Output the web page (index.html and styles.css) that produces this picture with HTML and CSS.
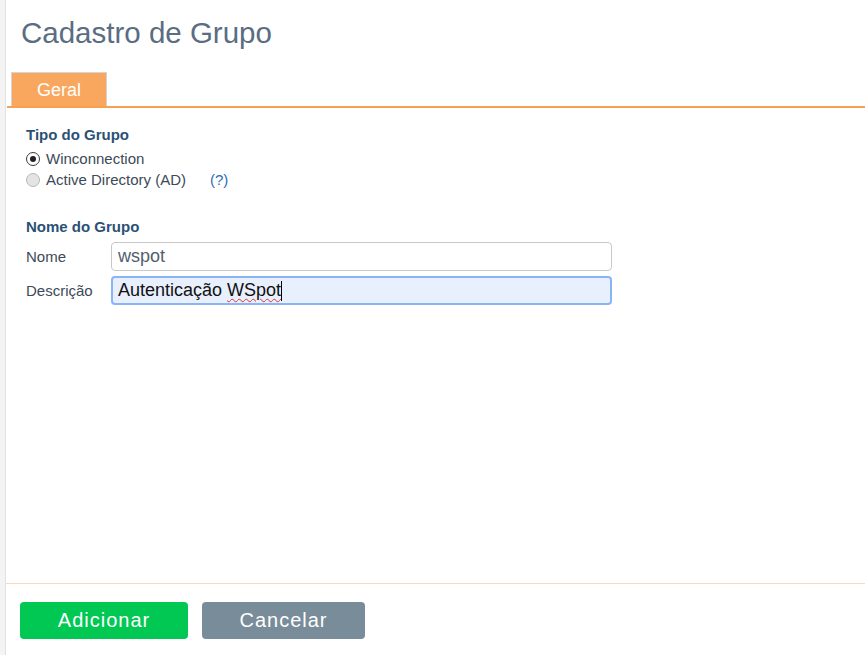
FILE: index.html
```html
<!DOCTYPE html>
<html lang="pt">
<head>
<meta charset="utf-8">
<title>Cadastro de Grupo</title>
<link rel="stylesheet" href="styles.css">
</head>
<body>
<div class="page">
  <h1 class="title">Cadastro de Grupo</h1>
  <div class="tabs">
    <div class="tab active">Geral</div>
  </div>
  <div class="content">
    <div class="section-title">Tipo do Grupo</div>
    <label class="radio-row"><span class="radio checked"></span>Winconnection</label>
    <label class="radio-row"><span class="radio"></span>Active Directory (AD)<span class="help">(?)</span></label>

    <div class="section-title second">Nome do Grupo</div>
    <div class="field-row">
      <span class="field-label">Nome</span>
      <div class="input">wspot</div>
    </div>
    <div class="field-row">
      <span class="field-label">Descrição</span>
      <div class="input focused"><span class="typed">Autenticação <span class="spell">WSpot</span></span><span class="caret"></span></div>
    </div>
  </div>
  <div class="footer">
    <button class="btn btn-add">Adicionar</button>
    <button class="btn btn-cancel">Cancelar</button>
  </div>
</div>
</body>
</html>
```
FILE: styles.css
```css
html, body {
  margin: 0;
  padding: 0;
  height: 100%;
}
body {
  background: #f4f4f4;
  font-family: "Liberation Sans", Arial, sans-serif;
  color: #333;
}
.page {
  margin-left: 5px;
  border-left: 1px solid #e2e2e2;
  background: #fff;
  height: 655px;
  display: flex;
  flex-direction: column;
  box-sizing: border-box;
}
.title {
  margin: 0;
  padding: 15px 0 0 15px;
  height: 72px;
  box-sizing: border-box;
  font-size: 29.5px;
  font-weight: normal;
  color: #5a6d82;
  line-height: 36px;
}
.tabs {
  display: flex;
  padding-left: 4px;
  border-bottom: 2px solid #f7a052;
  margin-left: 1px;
}
.tab {
  width: 96px;
  height: 34px;
  box-sizing: border-box;
  border: 1px solid #d4d4d4;
  border-bottom: none;
  background: #f9a75e;
  color: #fff;
  font-size: 18px;
  text-align: center;
  line-height: 34px;
}
.content {
  flex: 1;
  padding: 18px 0 0 20px;
}
.section-title {
  font-size: 15px;
  font-weight: bold;
  color: #2b5176;
  line-height: 18px;
  margin-bottom: 4px;
}
.section-title.second {
  margin-top: 28px;
  margin-bottom: 6px;
}
.radio-row {
  display: flex;
  align-items: center;
  font-size: 15px;
  color: #3d4a57;
  height: 21px;
}
.radio {
  width: 14px;
  height: 14px;
  border-radius: 50%;
  border: 1px solid #b9b9b9;
  background: #e4e4e4;
  margin-right: 6px;
  box-sizing: border-box;
  position: relative;
}
.radio.checked {
  border: 1px solid #3a3a3a;
  background: #fff;
}
.radio.checked::after {
  content: "";
  position: absolute;
  left: 3px;
  top: 3px;
  width: 6px;
  height: 6px;
  border-radius: 50%;
  background: #222;
}
.help {
  color: #2f6fb3;
  margin-left: 24px;
}
.field-row {
  display: flex;
  align-items: center;
  margin-bottom: 5px;
}
.field-label {
  width: 85px;
  font-size: 15px;
  color: #3d4a57;
}
.input {
  width: 501px;
  height: 29px;
  box-sizing: border-box;
  border: 1px solid #c8c8c8;
  border-radius: 4px;
  background: #fff;
  font-size: 18px;
  color: #52606e;
  padding: 0 6px;
  line-height: 27px;
  display: flex;
  align-items: center;
}
.input.focused {
  border: 2px solid #8ab4f8;
  background: #e8f0fe;
  color: #111;
  padding: 0 5px;
}
.spell {
  text-decoration: underline wavy #e03030;
  text-decoration-thickness: 1px;
  text-underline-offset: 2px;
}
.caret {
  display: inline-block;
  width: 1px;
  height: 20px;
  background: #000;
}
.footer {
  border-top: 1px solid #fbd9bd;
  margin-bottom: 17px;
  padding: 18px 0 0 14px;
  display: flex;
  gap: 14px;
  height: 55px;
  box-sizing: border-box;
}
.btn {
  width: 168px;
  height: 37px;
  border: none;
  border-radius: 4px;
  color: #fff;
  font-family: "Liberation Sans", Arial, sans-serif;
  font-size: 20px;
  letter-spacing: 1px;
  cursor: pointer;
}
.btn-add {
  background: #00c853;
}
.btn-cancel {
  width: 163px;
  background: #788c99;
}
```
